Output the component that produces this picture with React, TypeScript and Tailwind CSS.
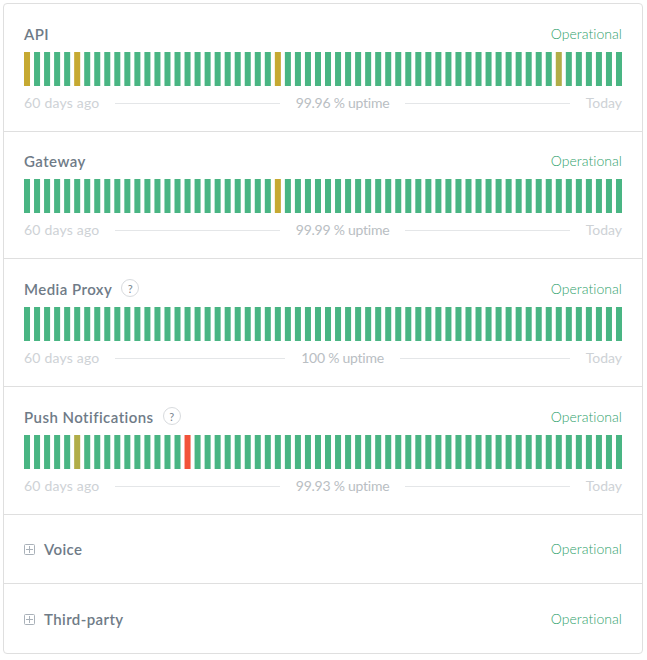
import React from 'react';

type Component = {
  name: string;
  help?: boolean;
  uptime?: string;
  days?: Record<number, string>;
};

const GREEN = '#49b583';
const AMBER = '#c6a932';
const OLIVE = '#b1ad48';
const RED = '#f2533a';

const components: Component[] = [
  { name: 'API', uptime: '99.96 % uptime', days: { 0: AMBER, 5: AMBER, 25: AMBER, 53: OLIVE } },
  { name: 'Gateway', uptime: '99.99 % uptime', days: { 25: AMBER } },
  { name: 'Media Proxy', help: true, uptime: '100 % uptime' },
  { name: 'Push Notifications', help: true, uptime: '99.93 % uptime', days: { 5: OLIVE, 16: RED } },
];

const groups = ['Voice', 'Third-party'];

const UptimeBars = ({ days = {} }: { days?: Record<number, string> }) => (
  <svg viewBox="0 0 298 17" preserveAspectRatio="none" className="block h-[34px] w-full">
    {Array.from({ length: 60 }).map((_, i) => (
      <rect key={i} x={i * 5} y={0} width={3} height={17} fill={days[i] ?? GREEN} />
    ))}
  </svg>
);

const HelpIcon = () => (
  <span className="mb-[2px] ml-[9px] flex h-[18px] w-[18px] items-center justify-center rounded-full border border-[#d8dbde] text-[11px] leading-none text-[#7a8691]">
    ?
  </span>
);

const PlusBox = () => (
  <svg viewBox="0 0 11 11" className="h-[11px] w-[11px] shrink-0" fill="none" stroke="#a9b1b9" strokeWidth="1">
    <rect x="0.5" y="0.5" width="10" height="10" rx="1" />
    <path d="M5.5 2v7M2 5.5h7" />
  </svg>
);

export default function App() {
  return (
    <div className="h-[660px] w-[647px] bg-white pb-[4px] pl-[3px] pr-[4px] pt-[3px] font-['Lato','Open_Sans',sans-serif]">
      <div className="overflow-hidden rounded-[4px] border border-[#dfdfdf]">
        {/* Components with uptime */}
        {components.map((c) => (
          <div key={c.name} className="h-[127.67px] border-b border-[#dfdfdf] px-[20px] pt-[19.67px]">
            <div className="flex h-[21px] items-center justify-between">
              <div className="flex items-center">
                <span className="text-[15px] font-semibold leading-[21px] tracking-[0.45px] text-[#6f7b87]">{c.name}</span>
                {c.help && <HelpIcon />}
              </div>
              <span className="mb-[1px] text-[14px] font-light leading-[20px] tracking-[0.05px] text-[#2f9f6c]">Operational</span>
            </div>
            <div className="mt-[7px]">
              <UptimeBars days={c.days} />
            </div>
            <div className="mt-[6px] flex h-[21px] items-center text-[14px] text-[#ced2d6]">
              <span className="tracking-[0.2px]">60 days ago</span>
              <div className="mx-[16px] mt-[2px] h-px flex-1 bg-[#e4e6e8]" />
              <span className="tracking-[-0.25px] text-[#b9bec3]">{c.uptime}</span>
              <div className="mx-[16px] mt-[2px] h-px flex-1 bg-[#e4e6e8]" />
              <span>Today</span>
            </div>
          </div>
        ))}

        {/* Collapsed groups */}
        {groups.map((g, i) => (
          <div
            key={g}
            className={`flex h-[69px] items-center justify-between px-[20px] ${i === 0 ? 'border-b border-[#dfdfdf] pt-[2px]' : 'pt-[3px]'}`}
          >
            <div className="flex items-center gap-[9px]">
              <PlusBox />
              <span className="text-[15px] font-semibold tracking-[0.4px] text-[#6f7b87]">{g}</span>
            </div>
            <span className={`text-[14px] font-light tracking-[0.05px] text-[#2f9f6c] ${i === 0 ? 'mb-[3px]' : 'mb-[2px]'}`}>
              Operational
            </span>
          </div>
        ))}
      </div>
    </div>
  );
}
